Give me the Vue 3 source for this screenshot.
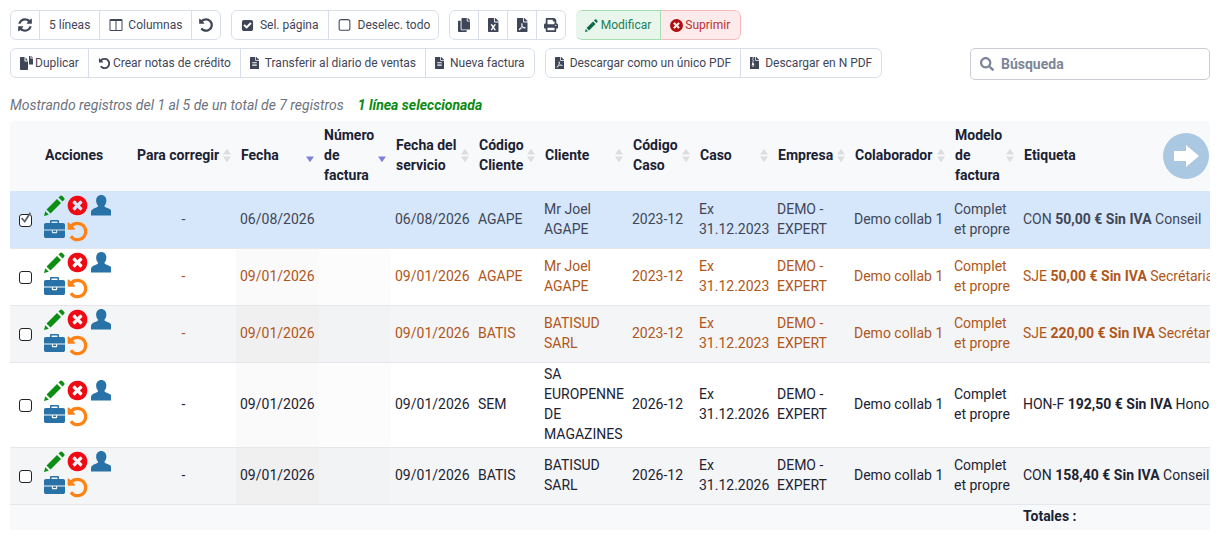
<script setup>
import { h } from 'vue'

const P = {
  refresh: [1792, 1792, 'M1639 1056q0 5-1 7-64 268-268 434.5t-478 166.5q-146 0-282.5-55t-243.5-157l-129 129q-19 19-45 19t-45-19-19-45v-448q0-26 19-45t45-19h448q26 0 45 19t19 45-19 45l-137 137q71 66 161 102t187 36q134 0 250-65t186-179q11-17 53-117 8-23 30-23h192q13 0 22.5 9.5t9.5 22.5zm25-800v448q0 26-19 45t-45 19h-448q-26 0-45-19t-19-45 19-45l138-138q-148-137-349-137-134 0-250 65t-186 179q-11 17-53 117-8 23-30 23h-199q-13 0-22.5-9.5t-9.5-22.5v-7q65-268 270-434.5t480-166.5q146 0 284 55.5t245 156.5l130-129q19-19 45-19t45 19 19 45z'],
  undo: [1792, 1792, 'M1664 896q0 156-61 298t-164 245-245 164-298 61q-172 0-327-72.5t-264-204.5q-7-10-6.5-22.5t8.5-20.5l137-138q10-9 25-9 16 2 23 12 73 95 179 147t225 52q104 0 198.5-40.5t163.5-109.5 109.5-163.5 40.5-198.5-40.5-198.5-109.5-163.5-163.5-109.5-198.5-40.5q-98 0-188 35.5t-160 101.5l137 138q31 30 14 69-17 40-59 40h-448q-26 0-45-19t-19-45v-448q0-42 40-59 39-17 69 14l130 129q107-101 244.5-156.5t284.5-55.5q156 0 298 61t245 164 164 245 61 298z'],
  user: [20, 20, 'M10 0c3 0 5 2.300 5 5.500 0 2.200-1 4-2 5 .2 1 1 1.500 3 2.200 2.500.8 4 2 4 4.300V20H0v-3c0-2.300 1.500-3.500 4-4.300 2-.7 2.800-1.200 3-2.200-1-1-2-2.800-2-5C5 2.300 7 0 10 0z'],
  briefcase: [1792, 1792, 'M640 256h512v-128h-512v128zm1152 640v480q0 66-47 113t-113 47h-1472q-66 0-113-47t-47-113v-480h672v160q0 26 19 45t45 19h320q26 0 45-19t19-45v-160h672zm-768 0v128h-256v-128h256zm768-480v384h-1792v-384q0-66 47-113t113-47h352v-160q0-40 28-68t68-28h576q40 0 68 28t28 68v160h352q66 0 113 47t47 113z'],
  columns: [1792, 1792, 'M224 1536h608v-1152h-640v1120q0 13 9.5 22.5t22.5 9.5zm1376-32v-1120h-640v1152h608q13 0 22.5-9.5t9.5-22.5zm128-1216v1216q0 66-47 113t-113 47h-1344q-66 0-113-47t-47-113v-1216q0-66 47-113t113-47h1344q66 0 113 47t47 113z'],
  check: [1792, 1792, 'M813 1299l614-614q19-19 19-45t-19-45l-102-102q-19-19-45-19t-45 19l-467 467-211-211q-19-19-45-19t-45 19l-102 102q-19 19-19 45t19 45l358 358q19 19 45 19t45-19zm851-883v960q0 119-84.5 203.5t-203.5 84.5h-960q-119 0-203.5-84.5t-84.5-203.5v-960q0-119 84.5-203.5t203.5-84.5h960q119 0 203.500 84.5t84.5 203.5z'],
  square: [1792, 1792, 'M1312 256h-832q-66 0-113 47t-47 113v832q0 66 47 113t113 47h832q66 0 113-47t47-113v-832q0-66-47-113t-113-47zm288 160v832q0 119-84.5 203.5t-203.5 84.5h-832q-119 0-203.5-84.5t-84.5-203.5v-832q0-119 84.5-203.5t203.5-84.5h832q119 0 203.5 84.5t84.5 203.5z'],
  copy: [448, 512, 'M320 448v40c0 13.255-10.745 24-24 24H24c-13.255 0-24-10.745-24-24V120c0-13.255 10.745-24 24-24h72v296c0 30.879 25.121 56 56 56h168zm0-344V0H152c-13.255 0-24 10.745-24 24v368c0 13.255 10.745 24 24 24h272c13.255 0 24-10.745 24-24V128H344c-13.2 0-24-10.8-24-24zm120.971-31.029L375.029 7.029A24 24 0 0 0 358.059 0H352v96h96v-6.059a24 24 0 0 0-7.029-16.97z'],
  dup: [13, 14, 'M.8 1H4.500V4.800c0 .4.300.7.7.7h2.800v7.700c0 .4-.3.8-.8.8H.8c-.4 0-.8-.4-.8-.8V1.800C0 1.400.4 1 .8 1zM5.500 1.200 7.800 4.500H5.500zM9 0h1.500v2.500H13V8.500H9zM11.300 0 13 1.800h-1.700z'],
  excel: [384, 512, 'M224 136V0H24C10.7 0 0 10.7 0 24v464c0 13.3 10.7 24 24 24h336c13.3 0 24-10.7 24-24V160H248c-13.2 0-24-10.8-24-24zm60.1 106.5L224 336l60.1 93.5c5.1 8-.6 18.5-10.1 18.5h-34.9c-4.4 0-8.5-2.4-10.6-6.3C208.9 405.5 192 373 192 373c-6.4 14.8-10 20-36.6 68.8-2.1 3.9-6.1 6.3-10.5 6.3H110c-9.5 0-15.2-10.5-10.1-18.5l60.3-93.5-60.3-93.5c-5.2-8 .6-18.5 10.1-18.5h34.8c4.4 0 8.5 2.4 10.6 6.3 26.1 48.8 20 33.6 36.6 68.5 0 0 6.1-11.7 36.6-68.5 2.1-3.9 6.2-6.3 10.6-6.3H274c9.5-.1 15.2 10.4 10.1 18.4zM384 121.9v6.1H256V0h6.1c6.4 0 12.5 2.5 17 7l97.9 98c4.5 4.5 7 10.6 7 16.9z'],
  pdf: [384, 512, 'M181.9 256.1c-5-16-4.9-46.9-2-46.9 8.4 0 7.6 36.9 2 46.9zm-1.7 47.2c-7.7 20.2-17.3 43.3-28.4 62.7 18.3-7 39-17.2 62.9-21.9-12.7-9.6-24.9-23.4-34.5-40.8zM86.1 428.1c0 .8 13.2-5.4 34.9-40.2-6.7 6.3-29.1 24.5-34.9 40.2zM248 160h136v328c0 13.3-10.7 24-24 24H24c-13.3 0-24-10.7-24-24V24C0 10.7 10.7 0 24 0h200v136c0 13.2 10.8 24 24 24zm-8 171.8c-20-12.2-33.3-29-42.7-53.8 4.5-18.5 11.6-46.6 6.2-64.2-4.7-29.4-42.4-26.5-47.8-6.8-5 18.3-.4 44.1 8.1 77-11.6 27.6-28.7 64.6-40.8 85.8-.1 0-.1.1-.2.1-27.1 13.9-73.6 44.5-54.5 68 5.6 6.9 16 10 21.5 10 17.9 0 35.7-18 61.1-61.8 25.8-8.5 54.1-19.1 79-23.2 21.7 11.8 47.1 19.5 64 19.5 29.2 0 31.2-32 19.7-43.4-13.9-13.6-54.3-9.7-73.6-7.2zM377 105L279 7c-4.5-4.5-10.6-7-17-7h-6v128h128v-6.1c0-6.3-2.5-12.4-7-16.9zm-74.1 255.3c4.1-2.7-2.5-11.9-42.8-9 37.1 15.8 42.8 9 42.8 9z'],
  print: [512, 512, 'M448 192V77.25c0-8.49-3.37-16.62-9.37-22.63L393.37 9.37c-6-6-14.14-9.37-22.63-9.37H96C78.33 0 64 14.33 64 32v160c-35.35 0-64 28.65-64 64v112c0 8.84 7.16 16 16 16h48v96c0 17.67 14.33 32 32 32h320c17.67 0 32-14.33 32-32v-96h48c8.84 0 16-7.16 16-16V256c0-35.35-28.65-64-64-64zm-64 256H128v-96h256v96zm0-224H128V64h192v48c0 8.84 7.16 16 16 16h48v96zm48 72c-13.25 0-24-10.75-24-24 0-13.26 10.75-24 24-24s24 10.74 24 24c0 13.25-10.75 24-24 24z'],
  file: [384, 512, 'M224 136V0H24C10.7 0 0 10.7 0 24v464c0 13.3 10.7 24 24 24h336c13.3 0 24-10.7 24-24V160H248c-13.2 0-24-10.8-24-24zm64 236c0 6.6-5.4 12-12 12H108c-6.6 0-12-5.4-12-12v-8c0-6.6 5.4-12 12-12h168c6.6 0 12 5.4 12 12v8zm0-64c0 6.6-5.4 12-12 12H108c-6.6 0-12-5.4-12-12v-8c0-6.6 5.4-12 12-12h168c6.6 0 12 5.4 12 12v8zm0-72v8c0 6.6-5.4 12-12 12H108c-6.6 0-12-5.4-12-12v-8c0-6.6 5.4-12 12-12h168c6.6 0 12 5.4 12 12zm96-114.1v6.1H256V0h6.1c6.4 0 12.5 2.5 17 7l97.9 98c4.5 4.5 7 10.6 7 16.9z'],
  archive: [384, 512, 'M377 105L279.1 7c-4.5-4.5-10.6-7-17-7H256v128h128v-6.1c0-6.3-2.5-12.4-7-16.9zM128.4 336c-17.9 0-32.4 12.1-32.4 27 0 15 14.6 27 32.5 27s32.4-12.1 32.4-27-14.6-27-32.5-27zM224 136V0h-63.6v32h-32V0H24C10.7 0 0 10.7 0 24v464c0 13.3 10.7 24 24 24h336c13.3 0 24-10.7 24-24V160H248c-13.2 0-24-10.8-24-24zM95.9 32h32v32h-32zm32.3 384c-33.2 0-58-30.4-51.4-62.9L96.4 256v-32h32v-32h-32v-32h32v-32h-32V96h32V64h32v32h-32v32h32v32h-32v32h32v32h-32v32h22.1c5.7 0 10.7 4.1 11.8 9.7l17.3 87.7c6.4 32.4-18.4 62.6-51.4 62.6z'],
  search: [512, 512, 'M505 442.7L405.3 343c-4.5-4.5-10.6-7-17-7H372c27.6-35.3 44-79.7 44-128C416 93.1 322.9 0 208 0S0 93.1 0 208s93.1 208 208 208c48.3 0 92.7-16.4 128-44v16.3c0 6.4 2.5 12.5 7 17l99.7 99.7c9.4 9.4 24.6 9.4 33.9 0l28.3-28.3c9.4-9.4 9.4-24.6.1-34zM208 336c-70.7 0-128-57.2-128-128 0-70.7 57.2-128 128-128 70.7 0 128 57.2 128 128 0 70.7-57.2 128-128 128z'],
  pen: [21, 21, 'M0 21l1.300-4.800 3.500 3.500zM2.500 14.500 13 4l4 4L6.500 18.500zM14.500 2.500 16 1c.8-.8 1.600-.8 2.300 0L20 2.700c.8.700.8 1.500 0 2.300l-1.500 1.500z'],
  times: [1792, 1792, 'M1277 1122q0-26-19-45l-181-181 181-181q19-19 19-45 0-27-19-46l-90-90q-19-19-46-19-26 0-45 19l-181 181-181-181q-19-19-45-19-27 0-46 19l-90 90q-19 19-19 46 0 26 19 45l181 181-181 181q-19 19-19 45 0 27 19 46l90 90q19 19 46 19 26 0 45-19l181-181 181 181q19 19 45 19 27 0 46-19l90-90q19-19 19-46zm387-226q0 209-103 385.5t-279.5 279.5-385.5 103-385.5-103-279.5-279.5-103-385.5 103-385.5 279.5-279.5 385.5-103 385.5 103 279.5 279.5 103 385.5z']
}

const Ic = (props) => {
  const [w, hh, d] = P[props.n]
  return h('svg', { viewBox: `0 0 ${w} ${hh}`, width: (props.s * w) / hh, height: props.s, fill: 'currentColor' }, [h('path', { d })])
}
Ic.props = ['n', 's']

const heads = [
  { t: 'Acciones' },
  { t: 'Para corregir', sort: 'both' },
  { t: 'Fecha', sort: 'desc' },
  { t: 'Número de factura', sort: 'desc' },
  { t: 'Fecha del servicio', sort: 'both' },
  { t: 'Código Cliente', sort: 'both' },
  { t: 'Cliente', sort: 'both' },
  { t: 'Código Caso', sort: 'both' },
  { t: 'Caso', sort: 'both' },
  { t: 'Empresa', sort: 'both' },
  { t: 'Colaborador', sort: 'both' },
  { t: 'Modelo de factura', sort: 'both' },
  { t: 'Etiqueta' }
]

const widths = [30, 92, 104, 83, 72, 83, 66, 88, 67, 78, 77, 100, 69, 500]

const rows = [
  { sel: true, cls: 'selected', fix: '-', date: '06/08/2026', serv: '06/08/2026', code: 'AGAPE', client: 'Mr Joel AGAPE', caseCode: '2023-12', caso: 'Ex 31.12.2023', a: 'CON', b: '50,00 € Sin IVA', c: 'Conseil' },
  { cls: 'late', fix: '-', date: '09/01/2026', serv: '09/01/2026', code: 'AGAPE', client: 'Mr Joel AGAPE', caseCode: '2023-12', caso: 'Ex 31.12.2023', a: 'SJE', b: '50,00 € Sin IVA', c: 'Secrétariat' },
  { cls: 'late odd', fix: '-', date: '09/01/2026', serv: '09/01/2026', code: 'BATIS', client: 'BATISUD SARL', caseCode: '2023-12', caso: 'Ex 31.12.2023', a: 'SJE', b: '220,00 € Sin IVA', c: 'Secrétariat' },
  { cls: 'plain', fix: '-', date: '09/01/2026', serv: '09/01/2026', code: 'SEM', client: 'SA EUROPENNE DE MAGAZINES', caseCode: '2026-12', caso: 'Ex 31.12.2026', a: 'HON-F', b: '192,50 € Sin IVA', c: 'Honoraires' },
  { cls: 'plain odd', fix: '-', date: '09/01/2026', serv: '09/01/2026', code: 'BATIS', client: 'BATISUD SARL', caseCode: '2026-12', caso: 'Ex 31.12.2026', a: 'CON', b: '158,40 € Sin IVA', c: 'Conseil' }
]
</script>

<template>
  <div class="page">
    <div class="tools">
      <div class="tool-rows">
        <div class="tool-row">
          <div class="group">
            <button class="btn icon-btn"><Ic n="refresh" s="16" /></button>
            <button class="btn lines">5 líneas</button>
            <button class="btn gap5"><Ic n="columns" s="14" />Columnas</button>
            <button class="btn icon-btn"><Ic n="undo" s="16" /></button>
          </div>
          <div class="group">
            <button class="btn gap6"><Ic n="check" s="13" />Sel. página</button>
            <button class="btn gap6 pad8"><Ic n="square" s="15" />Deselec. todo</button>
          </div>
          <div class="group">
            <button class="btn icon-btn"><Ic n="copy" s="14" /></button>
            <button class="btn icon-btn"><Ic n="excel" s="14" /></button>
            <button class="btn icon-btn"><Ic n="pdf" s="14" /></button>
            <button class="btn icon-btn"><Ic n="print" s="14" /></button>
          </div>
          <div class="group colored">
            <button class="btn edit"><Ic n="pen" s="13" />Modificar</button>
            <button class="btn del"><Ic n="times" s="15" />Suprimir</button>
          </div>
        </div>
        <div class="tool-row">
          <div class="group">
            <button class="btn tight"><Ic n="dup" s="14" />Duplicar</button>
            <button class="btn tight"><Ic n="undo" s="13" />Crear notas de crédito</button>
            <button class="btn gap6"><Ic n="file" s="12" />Transferir al diario de ventas</button>
            <button class="btn gap6"><Ic n="file" s="12" />Nueva factura</button>
          </div>
          <div class="group">
            <button class="btn gap6"><Ic n="pdf" s="12" />Descargar como un único PDF</button>
            <button class="btn gap6"><Ic n="archive" s="12" />Descargar en N PDF</button>
          </div>
        </div>
      </div>
      <div class="search">
        <Ic n="search" s="14" />
        <span>Búsqueda</span>
      </div>
    </div>

    <div class="info">
      <em>Mostrando registros del 1 al 5 de un total de 7 registros</em>
      <strong>1 línea seleccionada</strong>
    </div>

    <div class="table-wrap">
      <table>
        <colgroup>
          <col v-for="(w, i) in widths" :key="i" :style="{ width: w + 'px' }" />
        </colgroup>
        <thead>
          <tr>
            <th></th>
            <th v-for="h2 in heads" :key="h2.t">
              <div class="th">
                <span>{{ h2.t }}</span>
                <svg v-if="h2.sort" class="sort" viewBox="0 0 9 16" width="8" height="15">
                  <path v-if="h2.sort === 'both'" d="M4.500 0.5 9 7H0z" fill="#dcdde0" />
                  <path d="M0 9h9L4.500 15.500z" :fill="h2.sort === 'both' ? '#dcdde0' : '#7f82dc'" />
                </svg>
              </div>
            </th>
          </tr>
        </thead>
        <tbody>
          <tr v-for="(r, i) in rows" :key="i" :class="r.cls">
            <td class="cb">
              <span class="box">
                <input type="checkbox" :checked="r.sel" />
                <svg v-if="r.sel" class="tick" viewBox="0 0 16 16" width="14" height="14">
                  <path d="M3 8 6.500 12 13 2" fill="none" stroke="#5a6272" stroke-width="2" />
                </svg>
              </span>
            </td>
            <td class="acts">
              <div class="act-grid">
                <Ic class="green" n="pen" s="21" />
                <Ic class="red nudge" n="times" s="23" />
                <Ic class="blue" n="user" s="20.500" />
                <Ic class="blue" n="briefcase" s="21" />
                <Ic class="orange nudge2" n="undo" s="23" />
              </div>
            </td>
            <td class="center">{{ r.fix }}</td>
            <td class="sorted1">{{ r.date }}</td>
            <td class="sorted2"></td>
            <td>{{ r.serv }}</td>
            <td>{{ r.code }}</td>
            <td>{{ r.client }}</td>
            <td>{{ r.caseCode }}</td>
            <td>{{ r.caso }}</td>
            <td>DEMO - EXPERT</td>
            <td>Demo collab 1</td>
            <td>Complet et propre</td>
            <td class="label">{{ r.a }} <b>{{ r.b }}</b> {{ r.c }}</td>
          </tr>
        </tbody>
        <tfoot>
          <tr>
            <td colspan="13"></td>
            <td class="total">Totales :</td>
          </tr>
        </tfoot>
      </table>
      <svg class="next" viewBox="0 0 46 46" width="46" height="46">
        <circle cx="23" cy="23" r="23" fill="#abc8e2" />
        <path d="M11 18h12v-6l13 11-13 11v-6H11z" fill="#fff" />
      </svg>
    </div>
  </div>
</template>

<style>
html, body { margin: 0; background: #fff; }
</style>

<style scoped>
.page {
  width: 1220px;
  height: 550px;
  box-sizing: border-box;
  padding: 10px 10px 0;
  overflow: hidden;
  font-family: Roboto, "Liberation Sans", sans-serif;
  font-size: 14px;
  line-height: 20px;
  color: #3f4657;
}
.tools { display: flex; justify-content: space-between; align-items: flex-start; }
.tool-rows { display: flex; flex-direction: column; gap: 8px; }
.tool-row { display: flex; gap: 10px; }
.group {
  display: flex;
  height: 30px;
  box-sizing: border-box;
  border: 1px solid #d8deea;
  border-radius: 6px;
  background: #fff;
  overflow: hidden;
}
.btn {
  display: flex;
  align-items: center;
  gap: 5px;
  height: 28px;
  padding: 0 9px;
  border: 0;
  border-left: 1px solid #d8deea;
  background: transparent;
  font: 12px/28px Roboto, "Liberation Sans", sans-serif;
  color: #3f4657;
  white-space: nowrap;
}
.btn:first-child { border-left: 0; }
.btn svg { flex: none; }
.icon-btn { width: 29px; padding: 0; justify-content: center; box-sizing: border-box; }
.icon-btn:first-child { width: 28px; }
.icon-btn:last-child { width: 28.5px; }
.lines { padding: 0 9px; }
.gap5 { gap: 5px; }
.gap6 { gap: 6px; }
.pad8 { padding: 0 8px; }
.tight { gap: 2px; }
.colored { border: 0; }
.edit {
  height: 30px;
  padding: 0 9px;
  border: 1px solid #a5dcb0;
  border-radius: 6px 0 0 6px;
  background: #e8f6ec;
  color: #1a7f5a;
  gap: 3px;
}
.edit svg { color: #0e6b45; }
.btn.del {
  height: 30px;
  padding: 0 10px 0 8px;
  border: 1px solid #f4bcbc;
  border-left: 0;
  border-radius: 0 6px 6px 0;
  background: #fdeaea;
  color: #c03030;
  gap: 1px;
}
.del svg { color: #b01010; }
.search {
  display: flex;
  align-items: center;
  gap: 7px;
  width: 240px;
  height: 32px;
  margin-top: 38px;
  padding-left: 9px;
  box-sizing: border-box;
  border: 1px solid #c9ccd4;
  border-radius: 5px;
  color: #7c8698;
  font-weight: 700;
}
.info {
  display: flex;
  gap: 14px;
  margin-top: 15px;
  height: 20px;
  font-size: 14px;
}
.info em { color: #6d7380; }
.info strong { color: #0a8a12; font-style: italic; }
.table-wrap {
  position: relative;
  width: 1200px;
  margin-top: 6px;
  overflow: hidden;
  border-radius: 4px 4px 0 0;
}
table {
  width: 1409px;
  table-layout: fixed;
  border-collapse: separate;
  border-spacing: 0;
}
th {
  height: 70px;
  padding: 4px 5px 6px;
  box-sizing: border-box;
  background: #f8f9fb;
  color: #1a2233;
  text-align: left;
  font-weight: 700;
}
.th { display: flex; align-items: center; justify-content: space-between; gap: 2px; }
.sort { flex: none; }
td {
  height: 57px;
  padding: 1px 5px 3px 4px;
  box-sizing: border-box;
  border-top: 1px solid #e6e7ea;
  vertical-align: middle;
  color: #1c2333;
  background: #fff;
}
tr.selected td { background: #d6e6fb; color: #3f4657; border-top-color: #d6e6fb; }
tr.odd td { background: #f4f5f7; }
td.sorted1 { background: #fafafa; }
td.sorted2 { background: #fcfcfc; }
tr.odd td.sorted1 { background: #f0f0f1; }
tr.odd td.sorted2 { background: #f2f3f4; }
tr.selected td.sorted1, tr.selected td.sorted2 { background: #d6e6fb; }
tr.late td { color: #b0561a; }
.center { text-align: center; }
td.cb { padding: 0 0 0 9px; }
.box { position: relative; display: block; width: 13px; height: 13px; }
.box input {
  appearance: none;
  display: block;
  width: 13px;
  height: 13px;
  margin: 0;
  box-sizing: border-box;
  border: 1.5px solid #222;
  border-radius: 3px;
  background: #fff;
}
.tick { position: absolute; left: 0; top: -3px; }
td.acts { padding: 0 0 0 3.5px; }
.act-grid {
  display: grid;
  grid-template-columns: 24px 23.4px 21px;
  grid-auto-rows: 24.5px;
  height: 47.5px;
  padding-bottom: 2px;
  align-items: start;
}
.green { color: #0b8f12; }
.red { color: #f00a14; }
.blue { color: #2872a8; }
.orange { color: #ff8214; }
.nudge { margin: -1.400px 0 0 -1.400px; }
.nudge2 { margin-left: -1.300px; }
.label { white-space: nowrap; }
.label b { font-weight: 700; }
tfoot td {
  height: 26px;
  padding: 0 5px 4px 4px;
  background: #f8f9fb;
}
td.total { font-weight: 700; color: #1a2233; }
.next { position: absolute; right: 1px; top: 12px; }
</style>
